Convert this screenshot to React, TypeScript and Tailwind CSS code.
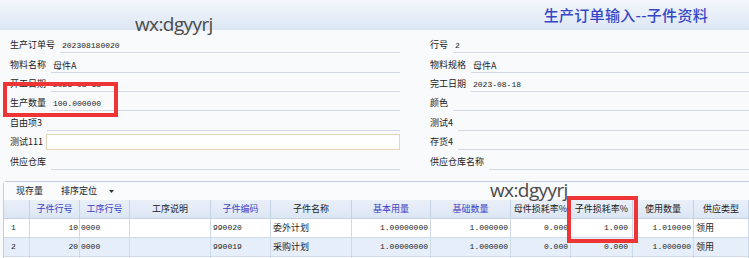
import React from 'react'

const cjk = { fontFamily: '"Noto Sans CJK SC", "Noto Sans", sans-serif' }
const mono = { fontFamily: '"Liberation Mono", "Noto Sans CJK SC", monospace' }

type Field = { label: string; value?: string; input?: boolean }

const rows: { h: string; left: Field; right: Field }[] = [
  { h: 'h-[19px]', left: { label: '生产订单号', value: '202308180020' }, right: { label: '行号', value: '2' } },
  { h: 'h-[20px]', left: { label: '物料名称', value: '母件A' }, right: { label: '物料规格', value: '母件A' } },
  { h: 'h-[19px]', left: { label: '开工日期', value: '2023-08-18' }, right: { label: '完工日期', value: '2023-08-18' } },
  { h: 'h-[19px]', left: { label: '生产数量', value: '100.000000' }, right: { label: '颜色' } },
  { h: 'h-[20px]', left: { label: '自由项3' }, right: { label: '测试4' } },
  { h: 'h-[19px]', left: { label: '测试111', input: true }, right: { label: '存货4' } },
  { h: 'h-[20px]', left: { label: '供应仓库' }, right: { label: '供应仓库名称' } },
]

const FieldCell = ({ f }: { f: Field }) => {
  const numeric = /^[0-9]/.test(f.value || '')
  return (
    <div className="flex items-end w-full">
      <span className="shrink-0 text-[9px] leading-[14px] pb-[1px] text-[#222]" style={cjk}>
        {f.label}
      </span>
      {f.input ? (
        <div className="flex-1 ml-[3px] h-[16px] border border-[#e4d6b8] bg-white" />
      ) : (
        <div
          className={`flex-1 ml-[5px] h-[14px] border-b border-[#d3d9e2] pl-[2px] leading-[13px] text-[#222] ${numeric ? 'text-[8px]' : 'text-[9px]'}`}
          style={numeric ? mono : cjk}
        >
          {f.value}
        </div>
      )}
    </div>
  )
}

const cols = [
  { t: '', blue: false },
  { t: '子件行号', blue: true },
  { t: '工序行号', blue: true },
  { t: '工序说明', blue: false },
  { t: '子件编码', blue: true },
  { t: '子件名称', blue: false },
  { t: '基本用量', blue: true },
  { t: '基础数量', blue: true },
  { t: '母件损耗率%', blue: false },
  { t: '子件损耗率%', blue: false },
  { t: '使用数量', blue: false },
  { t: '供应类型', blue: false },
]

const data = [
  ['1', '10', '0000', '', '990020', '委外计划', '1.00000000', '1.000000', '0.000', '1.000', '1.010000', '领用'],
  ['2', '20', '0000', '', '990019', '采购计划', '1.00000000', '1.000000', '0.000', '0.000', '1.000000', '领用'],
  ['', '', '', '', '', '', '', '', '', '', '', ''],
]

const align = ['text-left pl-[7px]', 'text-right pr-[1px]', 'text-left pl-[1px]', 'text-left', 'text-left pl-[2px]', 'text-left pl-[2px]', 'text-right pr-[2px]', 'text-right pr-[2px]', 'text-right pr-[2px]', 'text-right pr-[4px]', 'text-right pr-[2px]', 'text-left pl-[2px]']

const grid = 'grid grid-cols-[26px_50px_50px_81px_60px_81px_79px_80px_60px_62px_61px_1fr]'

const App: React.FC = () => {
  return (
    <div className="relative w-[749px] h-[258px] overflow-hidden bg-[#f9fafc]">
      <div className="h-[30px] flex items-center justify-end pr-[41px] bg-gradient-to-b from-[#f4f7fc] to-[#dce6f3]">
        <span className="text-[15px] font-medium text-[#3646c8] tracking-[0.3px]" style={cjk}>
          生产订单输入--子件资料
        </span>
      </div>

      <div className="pt-[4px]">
        {rows.map((r, i) => (
          <div key={i} className={`flex items-end ${r.h}`}>
            <div className="w-[400px] pl-[10px] shrink-0">
              <FieldCell f={r.left} />
            </div>
            <div className="flex-1 pl-[30px]">
              <FieldCell f={r.right} />
            </div>
          </div>
        ))}
      </div>

      <div className="mt-[11px] ml-[3px] border-l border-t border-[#c3ccd9] rounded-tl-[4px] bg-white">
        <div className="h-[18px] flex items-center text-[9px] text-[#222] bg-[#fafbfd]" style={cjk}>
          <span className="ml-[12px]">现存量</span>
          <span className="ml-[18px]">排序定位</span>
          <svg className="ml-[12px]" width="5" height="3" viewBox="0 0 5 3">
            <path d="M0 0H5L2.5 3Z" fill="#333" />
          </svg>
        </div>
        <div className={`${grid} h-[19px] bg-gradient-to-b from-[#eaf0f9] to-[#dbe6f4]`}>
          {cols.map((c, i) => (
            <div
              key={i}
              className={`border-r border-b border-[#c6d3e5] flex items-center justify-center text-[9px] ${c.blue ? 'text-[#3b3fc4]' : 'text-[#222]'}`}
              style={cjk}
            >
              {c.t}
            </div>
          ))}
        </div>
        {data.map((row, r) => (
          <div key={r} className={`${grid} h-[19px] ${r === 1 ? 'bg-[#e6eef9]' : 'bg-white'}`}>
            {row.map((v, i) => (
              <div
                key={i}
                className={`border-r border-b border-[#d0dbe9] text-[8px] leading-[18px] text-[#222] whitespace-nowrap overflow-hidden ${align[i]}`}
                style={/[\u4e00-\u9fff]/.test(v) ? { ...cjk, fontSize: '9px' } : mono}
              >
                {v}
              </div>
            ))}
          </div>
        ))}
      </div>

      <div className="absolute left-[135px] top-[10px] text-[19px] tracking-[-0.6px] text-[#4a4a4a]" style={{ fontFamily: '"Open Sans", sans-serif' }}>
        wx:dgyyrj
      </div>
      <div className="absolute left-[490px] top-[176px] text-[19px] tracking-[-0.6px] text-[#4a4a4a]" style={{ fontFamily: '"Open Sans", sans-serif' }}>
        wx:dgyyrj
      </div>

      <div className="absolute left-[3px] top-[82px] w-[115px] h-[35px] border-4 border-[#ee3535]" />
      <div className="absolute left-[567px] top-[196px] w-[71px] h-[47px] border-4 border-[#ee3535]" />
    </div>
  )
}

export default App
